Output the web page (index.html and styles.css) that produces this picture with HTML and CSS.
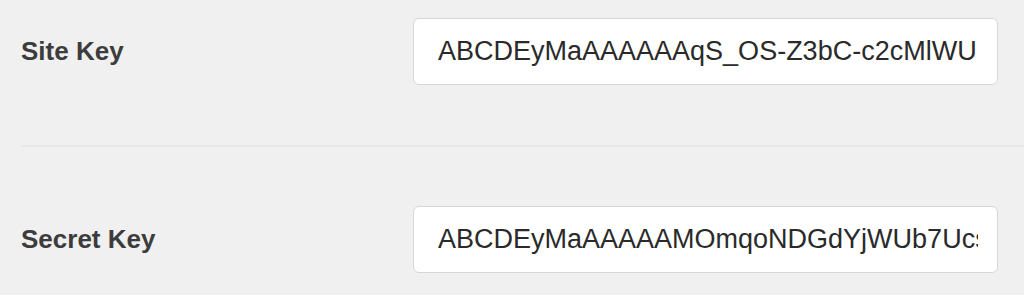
FILE: index.html
```html
<!DOCTYPE html>
<html lang="en">
<head>
<meta charset="utf-8">
<title>Keys</title>
<link rel="stylesheet" href="styles.css">
</head>
<body>
<div class="form">
  <div class="row row-first">
    <label class="label" for="site-key">Site Key</label>
    <input class="field" id="site-key" type="text" value="ABCDEyMaAAAAAAqS_OS-Z3bC-c2cMlWU">
  </div>
  <div class="row row-second">
    <label class="label" for="secret-key">Secret Key</label>
    <input class="field" id="secret-key" type="text" value="ABCDEyMaAAAAAMOmqoNDGdYjWUb7UcsXyZ">
  </div>
</div>
</body>
</html>
```
FILE: styles.css
```css
html, body {
  margin: 0;
  padding: 0;
  background: #f0f0f0;
}
body {
  font-family: "Liberation Sans", Arial, sans-serif;
  overflow: hidden;
}
.form {
  padding-left: 21px;
}
.row {
  display: flex;
  align-items: center;
}
.row-first {
  padding: 18px 0 60px;
  border-bottom: 2px solid #e6e6e6;
}
.row-second {
  padding-top: 59px;
}
.label {
  width: 392px;
  flex: none;
  font-size: 26px;
  font-weight: bold;
  color: #3c3c3c;
}
.field {
  box-sizing: border-box;
  width: 585px;
  height: 67px;
  margin: 0;
  padding: 0 19px 0 24px;
  border: 1.5px solid #d6d6d6;
  border-radius: 6px;
  background: #ffffff;
  font-family: "Liberation Sans", Arial, sans-serif;
  font-size: 27px;
  color: #2a2a2a;
  outline: none;
}
```
